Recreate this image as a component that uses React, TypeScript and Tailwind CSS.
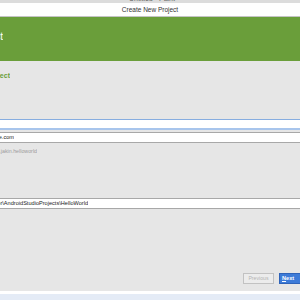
import type { ReactNode } from 'react';

// shows only the tail end of a line that runs off the left edge of the crop
function Clipped({ width, children }: { width: string; children: ReactNode }) {
  return (
    <span className={`flex justify-end overflow-hidden shrink-0 ${width}`}>
      <span className="whitespace-nowrap">{children}</span>
    </span>
  );
}

export default function App() {
  return (
    <div className="w-[300px] h-[300px] overflow-hidden bg-[#e6e6e6] flex flex-col font-['Liberation_Sans',Arial,sans-serif]">
      {/* paint window title, cut off at the top */}
      <div className="h-[3px] bg-[#dcdcdc] overflow-hidden flex justify-center">
        <span className="text-[7px] leading-[7px] -mt-[5px] pl-[4px] text-[#666] whitespace-nowrap">
          Untitled - Paint
        </span>
      </div>

      {/* dialog title bar */}
      <div className="h-[14px] bg-white border-b border-[#c4c4c4] flex items-center justify-center text-[6.5px] text-[#333]">
        Create New Project
      </div>

      {/* green header */}
      <div className="h-[44px] bg-[#6a9e3a] flex items-center pb-[6px] text-white text-[10px]">
        <Clipped width="w-[3px]">New Project</Clipped>
      </div>

      {/* form body */}
      <div className="flex-1 flex flex-col pt-[11px] pb-[7px]">
        <div className="h-[8px] flex items-center text-[7px] font-bold text-[#6a9e3a]">
          <Clipped width="w-[10px]">Configure your new project</Clipped>
        </div>

        {/* application name (focused) */}
        <div className="mt-[39px] h-[11px] bg-white border-t border-[#86ade0] border-b-2 border-b-[#a8c5ec]" />

        {/* company domain */}
        <div className="mt-[2px] h-[11px] bg-white border-y border-[#a8a8a8] flex items-center text-[5.6px] text-[#222]">
          <Clipped width="w-[14px]">jakin.example.com</Clipped>
        </div>

        {/* package name */}
        <div className="mt-[5px] h-[8px] flex items-center text-[5.3px] text-[#9c9c9c]">
          <Clipped width="w-[37px]">com.example.jakin.helloworld</Clipped>
        </div>

        {/* project location */}
        <div className="mt-[42px] h-[11px] bg-white border-y border-[#a8a8a8] flex items-center text-[5.6px] text-[#222]">
          <Clipped width="w-[88px]">C:\Users\Administrator\AndroidStudioProjects\HelloWorld</Clipped>
        </div>

        <div className="flex-1" />

        <div className="h-[11px] flex justify-end gap-[5px]">
          <button
            type="button"
            disabled
            className="w-[31px] h-full border border-[#c2c2c2] bg-[#ececec] text-[5.2px] text-[#b4b4b4] flex items-center justify-center"
          >
            Previous
          </button>
          <button
            type="button"
            className="w-[21px] h-full bg-[#3d7bd8] border border-r-0 border-[#2f63b8] text-[5.6px] font-bold text-white flex items-center pl-[2px]"
          >
            <span className="whitespace-nowrap">
              <span className="underline">N</span>ext
            </span>
          </button>
        </div>
      </div>

      <div className="h-[3px] bg-white" />
      <div className="h-[6px] bg-[#e4ebf6]" />
    </div>
  );
}
